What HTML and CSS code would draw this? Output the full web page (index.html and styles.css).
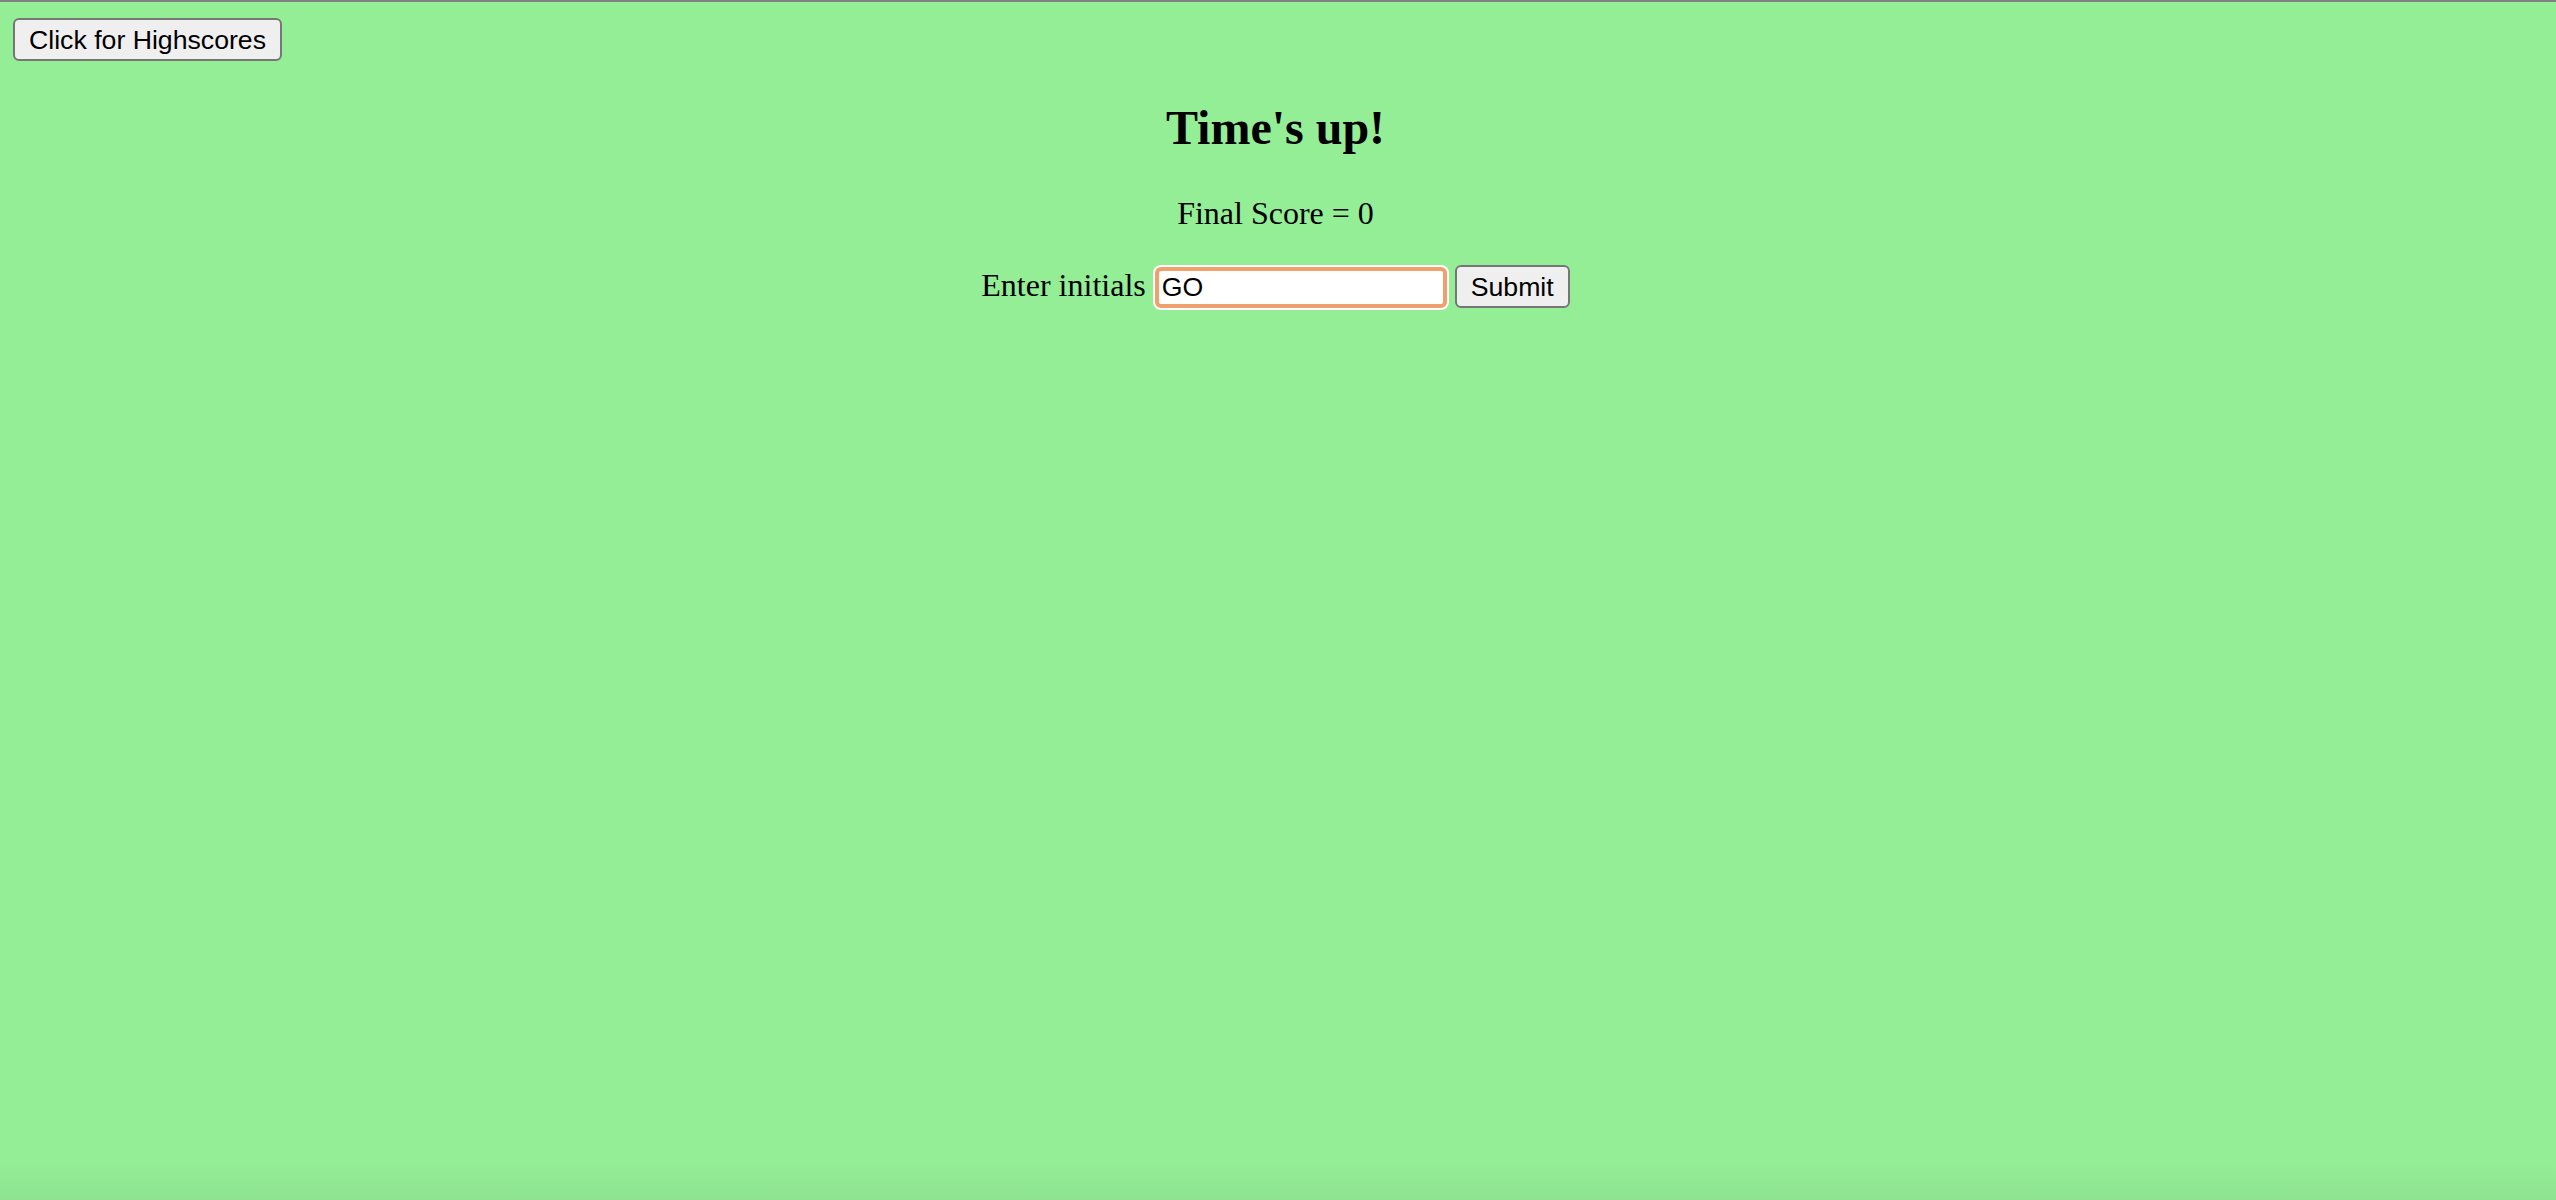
FILE: index.html
```html
<!DOCTYPE html>
<html lang="en">
<head>
<meta charset="utf-8">
<title>Quiz</title>
<link rel="stylesheet" href="styles.css">
</head>
<body>
<div class="page">
  <div class="top">
    <button class="btn">Click for Highscores</button>
  </div>
  <h2 class="title">Time's up!</h2>
  <p class="score">Final Score = 0</p>
  <form class="entry">
    <label class="label" for="initials">Enter initials</label>
    <input class="field" id="initials" type="text" value="GO">
    <button class="btn" type="button">Submit</button>
  </form>
</div>
</body>
</html>
```
FILE: styles.css
```css
html {
  height: 100%;
  background: linear-gradient(to bottom, #94ee96 0, #94ee96 1165px, #8ee290 1200px);
}
body {
  margin: 0;
  min-height: 100%;
  font-family: "Liberation Serif", "Times New Roman", serif;
  color: #000;
}
.page {
  border-top: 2px solid #808080;
  padding: 0 18px 0 13px;
}
.top {
  display: flex;
  margin-top: 16px;
  height: 43px;
}
.btn {
  box-sizing: border-box;
  height: 43px;
  margin: 0;
  padding: 0 14px;
  border: 2px solid #767676;
  border-radius: 6px;
  background: #efefef;
  color: #000;
  font-family: "Liberation Sans", Arial, sans-serif;
  font-size: 26.67px;
  line-height: 30px;
}
.title {
  margin: 39px 0 40px;
  text-align: center;
  font-size: 48px;
  line-height: 55px;
  font-weight: bold;
}
.score {
  margin: 0 0 33px;
  text-align: center;
  font-size: 32px;
  line-height: 37px;
}
.entry {
  display: flex;
  justify-content: center;
  align-items: baseline;
  gap: 8px;
  margin: 0;
}
.label {
  font-size: 32px;
  line-height: 37px;
}
.field {
  box-sizing: border-box;
  width: 292px;
  height: 41px;
  margin: 0 0 0 1px;
  padding: 0 3px;
  border: 4px solid #f0a06d;
  border-radius: 6px;
  box-shadow: 0 0 0 2px #ffffff;
  background: #fff;
  color: #000;
  font-family: "Liberation Sans", Arial, sans-serif;
  font-size: 26.67px;
  outline: none;
}
```
